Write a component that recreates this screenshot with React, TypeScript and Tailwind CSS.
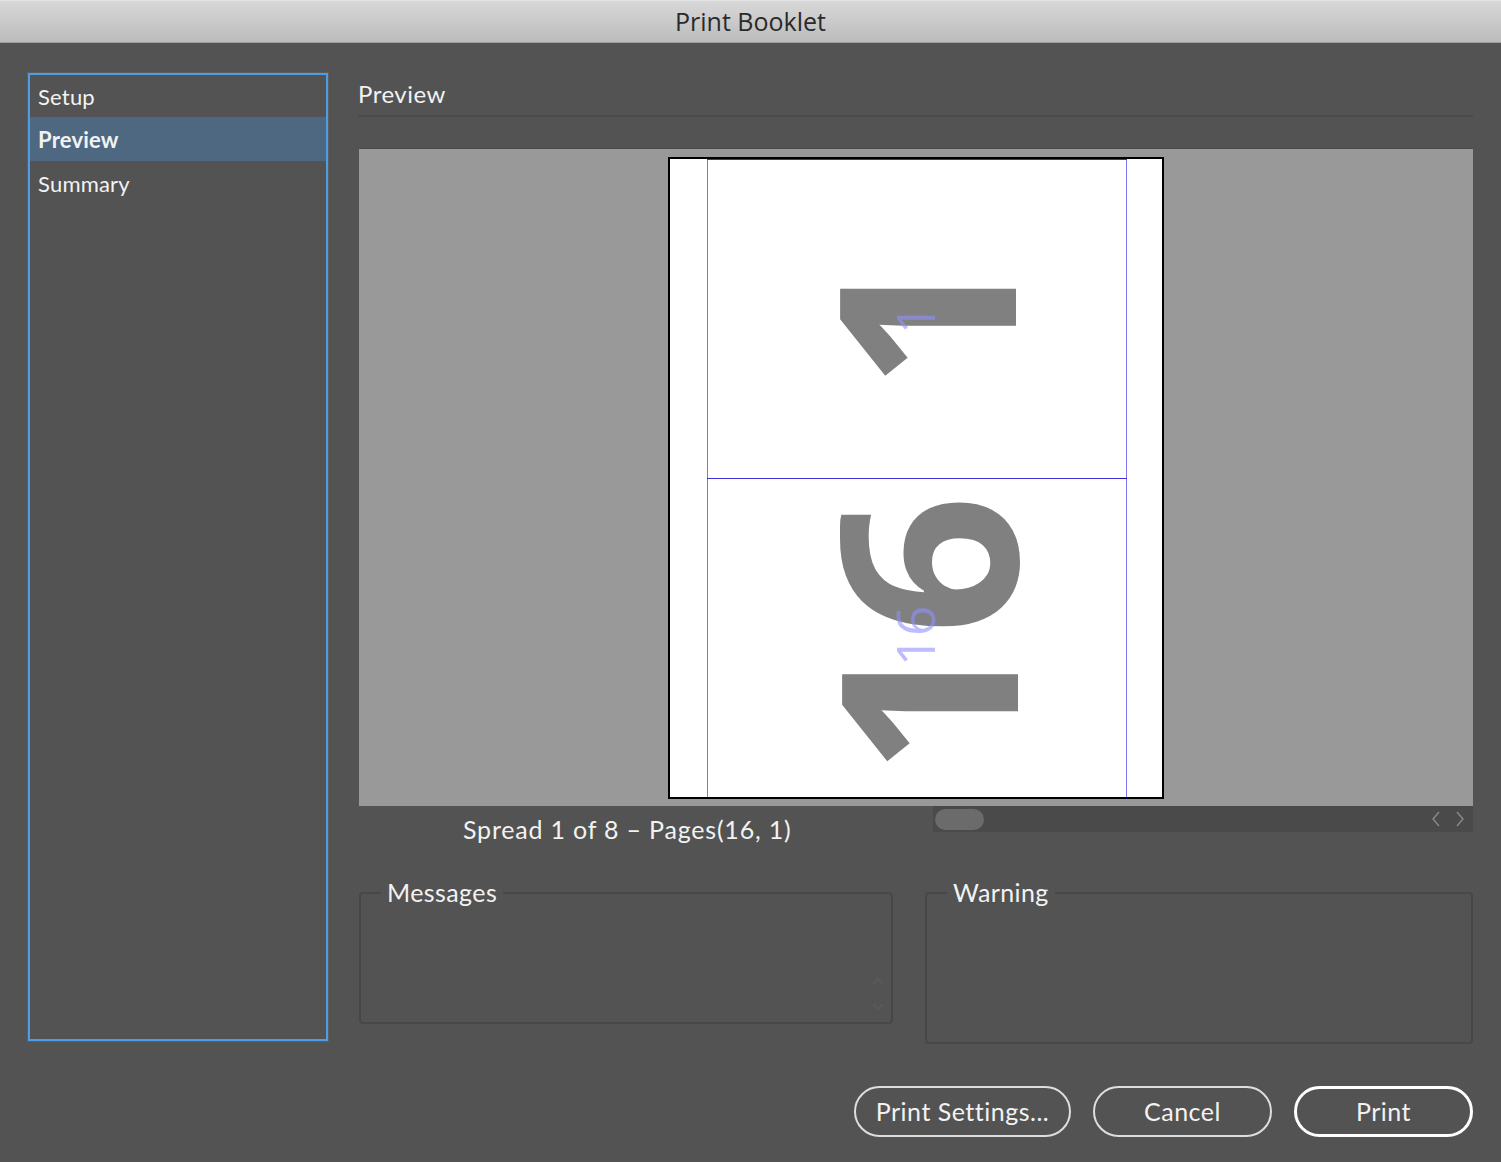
import React from "react";

function PagePreview() {
  return (
    <div className="w-[496px] h-[642px] border-2 border-black bg-white shrink-0">
      <svg width="492" height="638" viewBox="0 0 492 638" className="block">
        <line x1="37.5" y1="0" x2="37.5" y2="638" stroke="#7f74f2" strokeWidth="1" />
        <line x1="456.5" y1="0" x2="456.5" y2="638" stroke="#7f74f2" strokeWidth="1" />
        <line x1="37" y1="0.5" x2="457" y2="0.5" stroke="#3c30d4" strokeWidth="1" />
        <line x1="37" y1="319.5" x2="457" y2="319.5" stroke="#3c30d4" strokeWidth="1" />
        <text
          transform="translate(346,161) rotate(-90)"
          textAnchor="middle"
          fontFamily="'Open Sans', sans-serif"
          fontWeight="700"
          fontSize="246"
          fill="#808080"
        >
          1
        </text>
        <text
          transform="translate(348,476) rotate(-90)"
          textAnchor="middle"
          fontFamily="'Open Sans', sans-serif"
          fontWeight="700"
          fontSize="246"
          fill="#808080"
        >
          16
        </text>
        <text
          transform="translate(265,160) rotate(-90)"
          textAnchor="middle"
          fontFamily="'Open Sans', sans-serif"
          fontSize="53"
          fill="#9090ff"
          fillOpacity="0.6"
        >
          1
        </text>
        <text
          transform="translate(265,477) rotate(-90)"
          textAnchor="middle"
          fontFamily="'Open Sans', sans-serif"
          fontSize="53"
          fill="#9090ff"
          fillOpacity="0.6"
        >
          16
        </text>
      </svg>
    </div>
  );
}

function Group({ label, h, w }: { label: string; h: string; w: string }) {
  return (
    <div className={`relative border-2 border-[#474747] rounded-[4px] ${h} ${w}`}>
      <span className="absolute left-[20px] -top-[17px] px-[6px] bg-[#535353] text-[25px] tracking-[0.4px] leading-[30px] text-[#f2f2f2]">
        {label}
      </span>
      {label === "Messages" && (
        <svg className="absolute right-[6px] bottom-[8px]" width="14" height="40" viewBox="0 0 14 40">
          <path d="M2 10 L7 5 L12 10" fill="none" stroke="#5d5d5d" strokeWidth="1.2" />
          <path d="M2 30 L7 35 L12 30" fill="none" stroke="#5d5d5d" strokeWidth="1.2" />
        </svg>
      )}
    </div>
  );
}

export default function App() {
  return (
    <div className="w-[1501px] h-[1162px] bg-[#535353] flex flex-col overflow-hidden font-['Lato',sans-serif] text-[#f2f2f2]">
      <div className="h-[43px] shrink-0 bg-gradient-to-b from-[#d8d8d8] to-[#bcbcbc] border-t border-t-[#e4e4e4] border-b border-b-[#9c9c9c] flex items-center justify-center">
        <span className="font-['Open_Sans',sans-serif] text-[25px] text-[#2a2a2a] leading-none">Print Booklet</span>
      </div>
      <div className="flex pl-[28px] pr-[28px] pt-[30px]">
        <div className="w-[300px] h-[968px] shrink-0 border-2 border-[#4a9de6] outline outline-1 outline-[#5e5e5e] flex flex-col">
          <div className="h-[42px] flex items-center pl-[8px] text-[22px] tracking-[0.2px]">Setup</div>
          <div className="h-[44px] flex items-center pl-[8px] text-[22px] tracking-[0.2px] font-bold bg-[#4e6881]">Preview</div>
          <div className="h-[44px] flex items-center pl-[8px] text-[22px] tracking-[0.2px]">Summary</div>
        </div>
        <div className="flex-1 ml-[30px] flex flex-col">
          <div className="h-[42px] flex items-center text-[24px] tracking-[0.5px]">Preview</div>
          <div className="h-[2px] bg-[#4b4b4b]" />
          <div className="h-[31px]" />
          <div className="ml-[1px] h-[658px] bg-[#999999] border-t border-t-[#4a4a4a] flex items-center justify-center">
            <PagePreview />
          </div>
          <div className="flex h-[26px]">
            <div className="flex-1 pl-[105px] pt-[8px] text-[25px] tracking-[0.8px] leading-[30px] whitespace-nowrap">
              Spread 1 of 8 – Pages(16, 1)
            </div>
            <div className="w-[540px] h-[26px] bg-[#4a4a4a] flex items-center pl-[2px] pr-[8px]">
              <div className="w-[49px] h-[21px] rounded-full bg-[#6b6b6b]" />
              <div className="flex-1" />
              <svg width="10" height="18" viewBox="0 0 10 18" className="mr-[14px]">
                <path d="M8 2 L2 9 L8 16" fill="none" stroke="#8a8a8a" strokeWidth="1.4" />
              </svg>
              <svg width="10" height="18" viewBox="0 0 10 18">
                <path d="M2 2 L8 9 L2 16" fill="none" stroke="#8a8a8a" strokeWidth="1.4" />
              </svg>
            </div>
          </div>
          <div className="flex items-start gap-[32px] mt-[60px] ml-[1px]">
            <Group label="Messages" h="h-[132px]" w="w-[534px]" />
            <Group label="Warning" h="h-[152px]" w="w-[548px]" />
          </div>
          <div className="flex justify-end gap-[22px] mt-[42px]">
            <button className="h-[51px] w-[217px] rounded-full border-2 border-[#dedede] text-[25px] tracking-[0.5px] text-[#f2f2f2]">
              Print Settings...
            </button>
            <button className="h-[51px] w-[179px] rounded-full border-2 border-[#dedede] text-[25px] tracking-[0.5px] text-[#f2f2f2]">
              Cancel
            </button>
            <button className="h-[51px] w-[179px] rounded-full border-[3px] border-white text-[25px] tracking-[0.5px] text-[#f2f2f2]">
              Print
            </button>
          </div>
        </div>
      </div>
    </div>
  );
}
